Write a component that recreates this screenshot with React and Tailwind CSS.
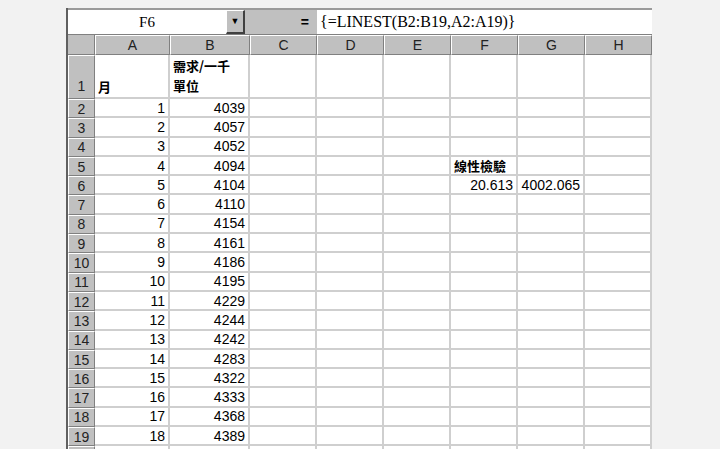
const cols = [
  { k: 'A', w: 75 },
  { k: 'B', w: 80 },
  { k: 'C', w: 67 },
  { k: 'D', w: 67 },
  { k: 'E', w: 67 },
  { k: 'F', w: 67 },
  { k: 'G', w: 67 },
  { k: 'H', w: 67 },
]

const demand = [4039, 4057, 4052, 4094, 4104, 4110, 4154, 4161, 4186, 4195, 4229, 4244, 4242, 4283, 4322, 4333, 4368, 4389]

const cjk = { fontFamily: '"Noto Sans CJK TC", "Noto Sans CJK SC", sans-serif' }

function Cell({ w, children, className = '' }) {
  return (
    <div
      className={`flex h-full shrink-0 border-r-2 border-b-2 border-[#cfcfcf] bg-white px-[3px] ${className}`}
      style={{ width: w }}
    >
      {children}
    </div>
  )
}

function RowHead({ n, className = '' }) {
  return (
    <div
      className={`flex h-full w-[27px] shrink-0 justify-center border-t border-l border-t-white border-l-white border-r border-b border-r-[#808080] border-b-[#808080] bg-[#c0c0c0] text-[14px] text-[#222] ${className}`}
    >
      {n}
    </div>
  )
}

export default function App() {
  return (
    <div className="h-[449px] w-[720px] overflow-hidden bg-[#f2f2f2] pt-[8px] pl-[66px] text-black" style={{ fontFamily: '"Liberation Sans", Arial, sans-serif' }}>
      <div className="w-[586px] border-l-2 border-[#606060]">
        {/* formula bar */}
        <div className="flex h-[27px] border-t-2 border-[#9a9a9a] border-b border-b-[#808080]">
          <div className="flex w-[158px] items-center justify-center bg-white text-[15px]" style={{ fontFamily: '"Liberation Serif", "Times New Roman", serif' }}>
            F6
          </div>
          <div className="flex w-[19px] items-center justify-center border-t border-l border-t-white border-l-white border-r-2 border-b-2 border-r-[#404040] border-b-[#404040] bg-[#c0c0c0] text-[9px]">
            ▼
          </div>
          <div className="flex w-[72px] items-center justify-end bg-[#c0c0c0] pr-[8px] text-[14px] font-bold">=</div>
          <div className="flex flex-1 items-center bg-white pl-[3px] text-[16px]" style={{ fontFamily: '"Liberation Serif", "Times New Roman", serif' }}>
            {'{=LINEST(B2:B19,A2:A19)}'}
          </div>
        </div>

        {/* column header */}
        <div className="flex h-[20px]">
          <div className="h-full w-[27px] shrink-0 border-r border-b border-[#808080] bg-[#c0c0c0]" />
          {cols.map((c) => (
            <div
              key={c.k}
              className="flex h-full shrink-0 items-center justify-center border-t border-l border-t-white border-l-white border-r border-b border-r-[#808080] border-b-[#808080] bg-[#c0c0c0] text-[14px] text-[#222]"
              style={{ width: c.w }}
            >
              {c.k}
            </div>
          ))}
        </div>

        {/* row 1 */}
        <div className="flex h-[44px]">
          <RowHead n={1} className="items-end pb-[1px]" />
          <Cell w={75} className="items-end pb-[1px]">
            <span className="text-[13px] font-bold" style={cjk}>月</span>
          </Cell>
          <Cell w={80} className="flex-col justify-end pb-[1px]">
            <span className="text-[13px] leading-[20px] font-bold" style={cjk}>需求/一千</span>
            <span className="text-[13px] leading-[20px] font-bold" style={cjk}>單位</span>
          </Cell>
          {cols.slice(2).map((c) => (
            <Cell key={c.k} w={c.w} />
          ))}
        </div>

        {demand.map((d, i) => (
          <div key={i} className="flex h-[19.3px]">
            <RowHead n={i + 2} className="items-center leading-none" />
            <Cell w={75} className="items-center justify-end text-[14px] leading-none">{i + 1}</Cell>
            <Cell w={80} className="items-center justify-end text-[14px] leading-none">{d}</Cell>
            <Cell w={67} />
            <Cell w={67} />
            <Cell w={67} />
            <Cell w={67} className="items-center leading-none">
              {i === 3 && <span className="text-[13px] font-bold" style={cjk}>線性檢驗</span>}
              {i === 4 && <span className="ml-auto text-[14px]">20.613</span>}
            </Cell>
            <Cell w={67} className="items-center justify-end leading-none">
              {i === 4 && <span className="text-[14px]">4002.065</span>}
            </Cell>
            <Cell w={67} />
          </div>
        ))}
        <div className="flex h-[10px]">
          <RowHead n="" />
          {cols.map((c) => (
            <Cell key={c.k} w={c.w} />
          ))}
        </div>
      </div>
    </div>
  )
}
